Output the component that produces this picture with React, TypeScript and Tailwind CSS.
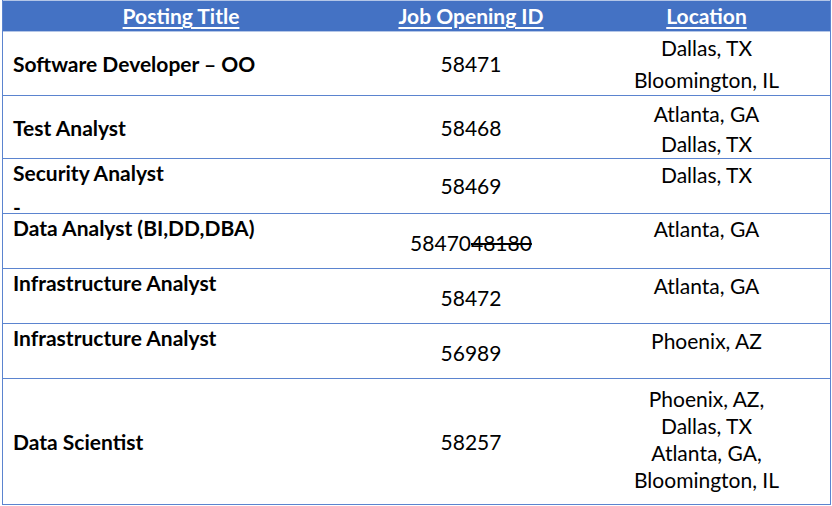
import React from "react";

type Row = {
  title: string;
  id: React.ReactNode;
  places: string[];
  height: string;
  titleCls: string;
  idCls: string;
  placeCls: string;
  dash?: boolean;
};

const rows: Row[] = [
  {
    title: "Software Developer – OO",
    id: "58471",
    places: ["Dallas, TX", "Bloomington, IL"],
    height: "h-[63px]",
    titleCls: "justify-center",
    idCls: "justify-center",
    placeCls: "pt-0 leading-[32px]",
  },
  {
    title: "Test Analyst",
    id: "58468",
    places: ["Atlanta, GA", "Dallas, TX"],
    height: "h-[63px]",
    titleCls: "justify-center",
    idCls: "justify-center",
    placeCls: "pt-[3px] leading-[30px]",
  },
  {
    title: "Security Analyst",
    id: "58469",
    places: ["Dallas, TX"],
    height: "h-[55px]",
    titleCls: "pt-0",
    idCls: "justify-center",
    placeCls: "pt-[2px] leading-[28px]",
    dash: true,
  },
  {
    title: "Data Analyst (BI,DD,DBA)",
    id: (
      <>
        58470<span className="line-through">48180</span>
      </>
    ),
    places: ["Atlanta, GA"],
    height: "h-[55px]",
    titleCls: "pt-0",
    idCls: "pt-[15px]",
    placeCls: "pt-[1px] leading-[28px]",
  },
  {
    title: "Infrastructure Analyst",
    id: "58472",
    places: ["Atlanta, GA"],
    height: "h-[55px]",
    titleCls: "pt-0",
    idCls: "pt-[15px]",
    placeCls: "pt-[3px] leading-[28px]",
  },
  {
    title: "Infrastructure Analyst",
    id: "56989",
    places: ["Phoenix, AZ"],
    height: "h-[55px]",
    titleCls: "pt-0",
    idCls: "pt-[15px]",
    placeCls: "pt-[3px] leading-[28px]",
  },
  {
    title: "Data Scientist",
    id: "58257",
    places: ["Phoenix, AZ,", "Dallas, TX", "Atlanta, GA,", "Bloomington, IL"],
    height: "h-[126px]",
    titleCls: "justify-center",
    idCls: "justify-center",
    placeCls: "pt-[6px] leading-[27px]",
  },
];

export default function App() {
  return (
    <div className="w-[832px] h-[506px] bg-white pl-[2px] font-['Lato',sans-serif] text-[21px] text-black">
      <div className="w-[829px] border-x border-b border-[#5b84cf]">
        <div className="grid grid-cols-[356px_224px_1fr] h-[32px] bg-[#4472c4] border-t border-b border-[#b4c6e7] text-white font-bold leading-[30px]">
          <div className="text-center">
            <span className="underline underline-offset-[3px]">Posting Title</span>
          </div>
          <div className="text-center">
            <span className="underline underline-offset-[3px]">Job Opening ID</span>
          </div>
          <div className="text-center">
            <span className="underline underline-offset-[3px]">Location</span>
          </div>
        </div>
        {rows.map((r, i) => (
          <div
            key={i}
            className={`grid grid-cols-[356px_224px_1fr] ${r.height} ${
              i === 0 ? "" : "border-t border-[#5b84cf]"
            }`}
          >
            <div className={`flex flex-col pl-[10px] font-bold leading-[28px] ${r.titleCls}`}>
              <div>{r.title}</div>
              {r.dash && <div className="mt-auto leading-[12px]">-</div>}
            </div>
            <div className={`flex flex-col items-center leading-[28px] ${r.idCls}`}>
              <div>{r.id}</div>
            </div>
            <div className={`flex flex-col items-center ${r.placeCls}`}>
              {r.places.map((p) => (
                <div key={p}>{p}</div>
              ))}
            </div>
          </div>
        ))}
      </div>
    </div>
  );
}
